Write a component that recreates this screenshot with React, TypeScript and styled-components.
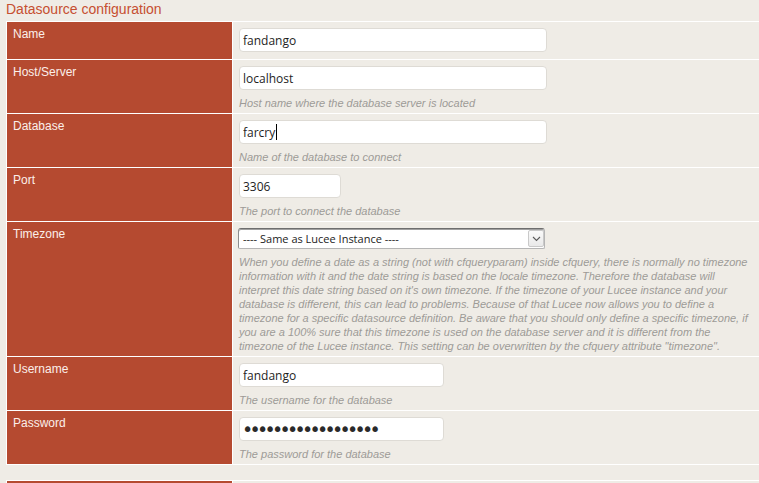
import React from "react";
import styled, { createGlobalStyle } from "styled-components";

const GlobalStyle = createGlobalStyle`
  html, body { margin: 0; padding: 0; overflow: hidden; background: #efece6; }
  body { font-family: "Liberation Sans", Arial, sans-serif; }
`;

const Page = styled.div`
  padding: 1px 0 0 6px;
  width: 759px;
  box-sizing: border-box;
`;

const Title = styled.h2`
  margin: 0 0 4px 0;
  font: normal 14px/16px "Liberation Sans", Arial, sans-serif;
  color: #c64f31;
`;

const Grid = styled.div<{ $mt?: number }>`
  display: grid;
  grid-template-columns: 225px 1fr;
  gap: 1px;
  padding: 1px;
  background: #ffffff;
  width: 754px;
  box-sizing: border-box;
  margin-top: ${(p) => p.$mt ?? 0}px;
`;

const Label = styled.div`
  background: #b54a30;
  color: #fbefea;
  padding: 5px 6px;
  font: normal 12px "Liberation Sans", Arial, sans-serif;
`;

const Value = styled.div<{ $h?: number }>`
  background: #efece6;
  padding: 6px 2px 3px 6px;
  min-height: ${(p) => p.$h ?? 0}px;
`;

const Field = styled.div`
  position: relative;
  width: max-content;
  margin-bottom: 4px;
`;

const TextInput = styled.input<{ $w: number }>`
  display: block;
  box-sizing: border-box;
  width: ${(p) => p.$w}px;
  height: 24px;
  margin: 0;
  padding: 0 3px;
  border: 1px solid #dedbd5;
  border-radius: 4px;
  background: #ffffff;
  font: normal 12px "Open Sans", "Noto Sans", sans-serif;
  color: #1e1e1e;
  outline: none;
`;

const PasswordInput = styled(TextInput)`
  font: normal 19px "DejaVu Sans", sans-serif;
  letter-spacing: -3.7px;
  padding: 0 2px;
  color: #2a2a2a;
`;

const Caret = styled.span`
  position: absolute;
  left: 37px;
  top: 4px;
  width: 1px;
  height: 16px;
  background: #000;
`;

const SelectWrap = styled.div`
  position: relative;
  width: 307px;
  margin: 0 0 4px -1px;
`;

const Select = styled.select`
  appearance: none;
  -webkit-appearance: none;
  display: block;
  box-sizing: border-box;
  width: 100%;
  height: 21px;
  margin: 0;
  padding: 0 22px 0 4px;
  border: 1px solid #b5b5b5;
  border-top-color: #6e6e6e;
  border-left-color: #8e8e8e;
  border-radius: 3px 3px 2px 2px;
  box-shadow: inset 0 1px 0 #a0a0a0;
  background: #ffffff;
  font: normal 11px "Open Sans", "Noto Sans", sans-serif;
  color: #222;
  outline: none;
`;

const ArrowBox = styled.span`
  position: absolute;
  top: 2px;
  right: 1px;
  width: 16px;
  height: 17px;
  box-sizing: border-box;
  border: 1px solid #c9c9c9;
  border-radius: 2px;
  background: linear-gradient(#fafafa, #e9e9e9);
  display: flex;
  align-items: center;
  justify-content: center;
  pointer-events: none;
`;

const Hint = styled.div`
  margin-top: 6px;
  font: italic 11px/14px "Liberation Sans", Arial, sans-serif;
  color: #9d9b97;
  white-space: nowrap;
`;

type Row = {
  label: string;
  value: string;
  width: number;
  hint?: string;
  type?: "text" | "password";
  caret?: boolean;
};

const rows: Row[] = [
  { label: "Name", value: "fandango", width: 308 },
  { label: "Host/Server", value: "localhost", width: 308, hint: "Host name where the database server is located" },
  { label: "Database", value: "farcry", width: 308, hint: "Name of the database to connect", caret: true },
  { label: "Port", value: "3306", width: 102, hint: "The port to connect the database" },
];

const rows2: Row[] = [
  { label: "Username", value: "fandango", width: 205, hint: "The username for the database" },
  { label: "Password", value: "xxxxxxxxxxxxxxxxxx", width: 205, hint: "The password for the database", type: "password" },
];

const tzLines = [
  "When you define a date as a string (not with cfqueryparam) inside cfquery, there is normally no timezone",
  "information with it and the date string is based on the locale timezone. Therefore the database will",
  "interpret this date string based on it's own timezone. If the timezone of your Lucee instance and your",
  "database is different, this can lead to problems. Because of that Lucee now allows you to define a",
  "timezone for a specific datasource definition. Be aware that you should only define a specific timezone, if",
  "you are a 100% sure that this timezone is used on the database server and it is different from the",
  'timezone of the Lucee instance. This setting can be overwritten by the cfquery attribute "timezone".',
];

function InputRow({ r }: { r: Row }) {
  return (
    <>
      <Label>{r.label}</Label>
      <Value>
        <Field>
          {r.type === "password" ? (
            <PasswordInput $w={r.width} type="password" defaultValue={r.value} />
          ) : (
            <TextInput $w={r.width} type="text" defaultValue={r.value} />
          )}
          {r.caret && <Caret />}
        </Field>
        {r.hint && <Hint>{r.hint}</Hint>}
      </Value>
    </>
  );
}

export default function App() {
  return (
    <>
      <GlobalStyle />
      <Page>
        <Title>Datasource configuration</Title>
        <Grid>
          {rows.map((r) => (
            <InputRow key={r.label} r={r} />
          ))}
          <Label>Timezone</Label>
          <Value>
            <SelectWrap>
              <Select defaultValue="">
                <option value="">---- Same as Lucee Instance ----</option>
              </Select>
              <ArrowBox>
                <svg width="9" height="6" viewBox="0 0 9 6">
                  <path d="M1 1 L4.5 4.5 L8 1" fill="none" stroke="#5a5a5a" strokeWidth="1.1" />
                </svg>
              </ArrowBox>
            </SelectWrap>
            <Hint>
              {tzLines.map((l, i) => (
                <React.Fragment key={i}>
                  {l}
                  {i < tzLines.length - 1 && <br />}
                </React.Fragment>
              ))}
            </Hint>
          </Value>
          {rows2.map((r) => (
            <InputRow key={r.label} r={r} />
          ))}
        </Grid>
        <Grid $mt={15}>
          <Label />
          <Value $h={28} />
        </Grid>
      </Page>
    </>
  );
}
